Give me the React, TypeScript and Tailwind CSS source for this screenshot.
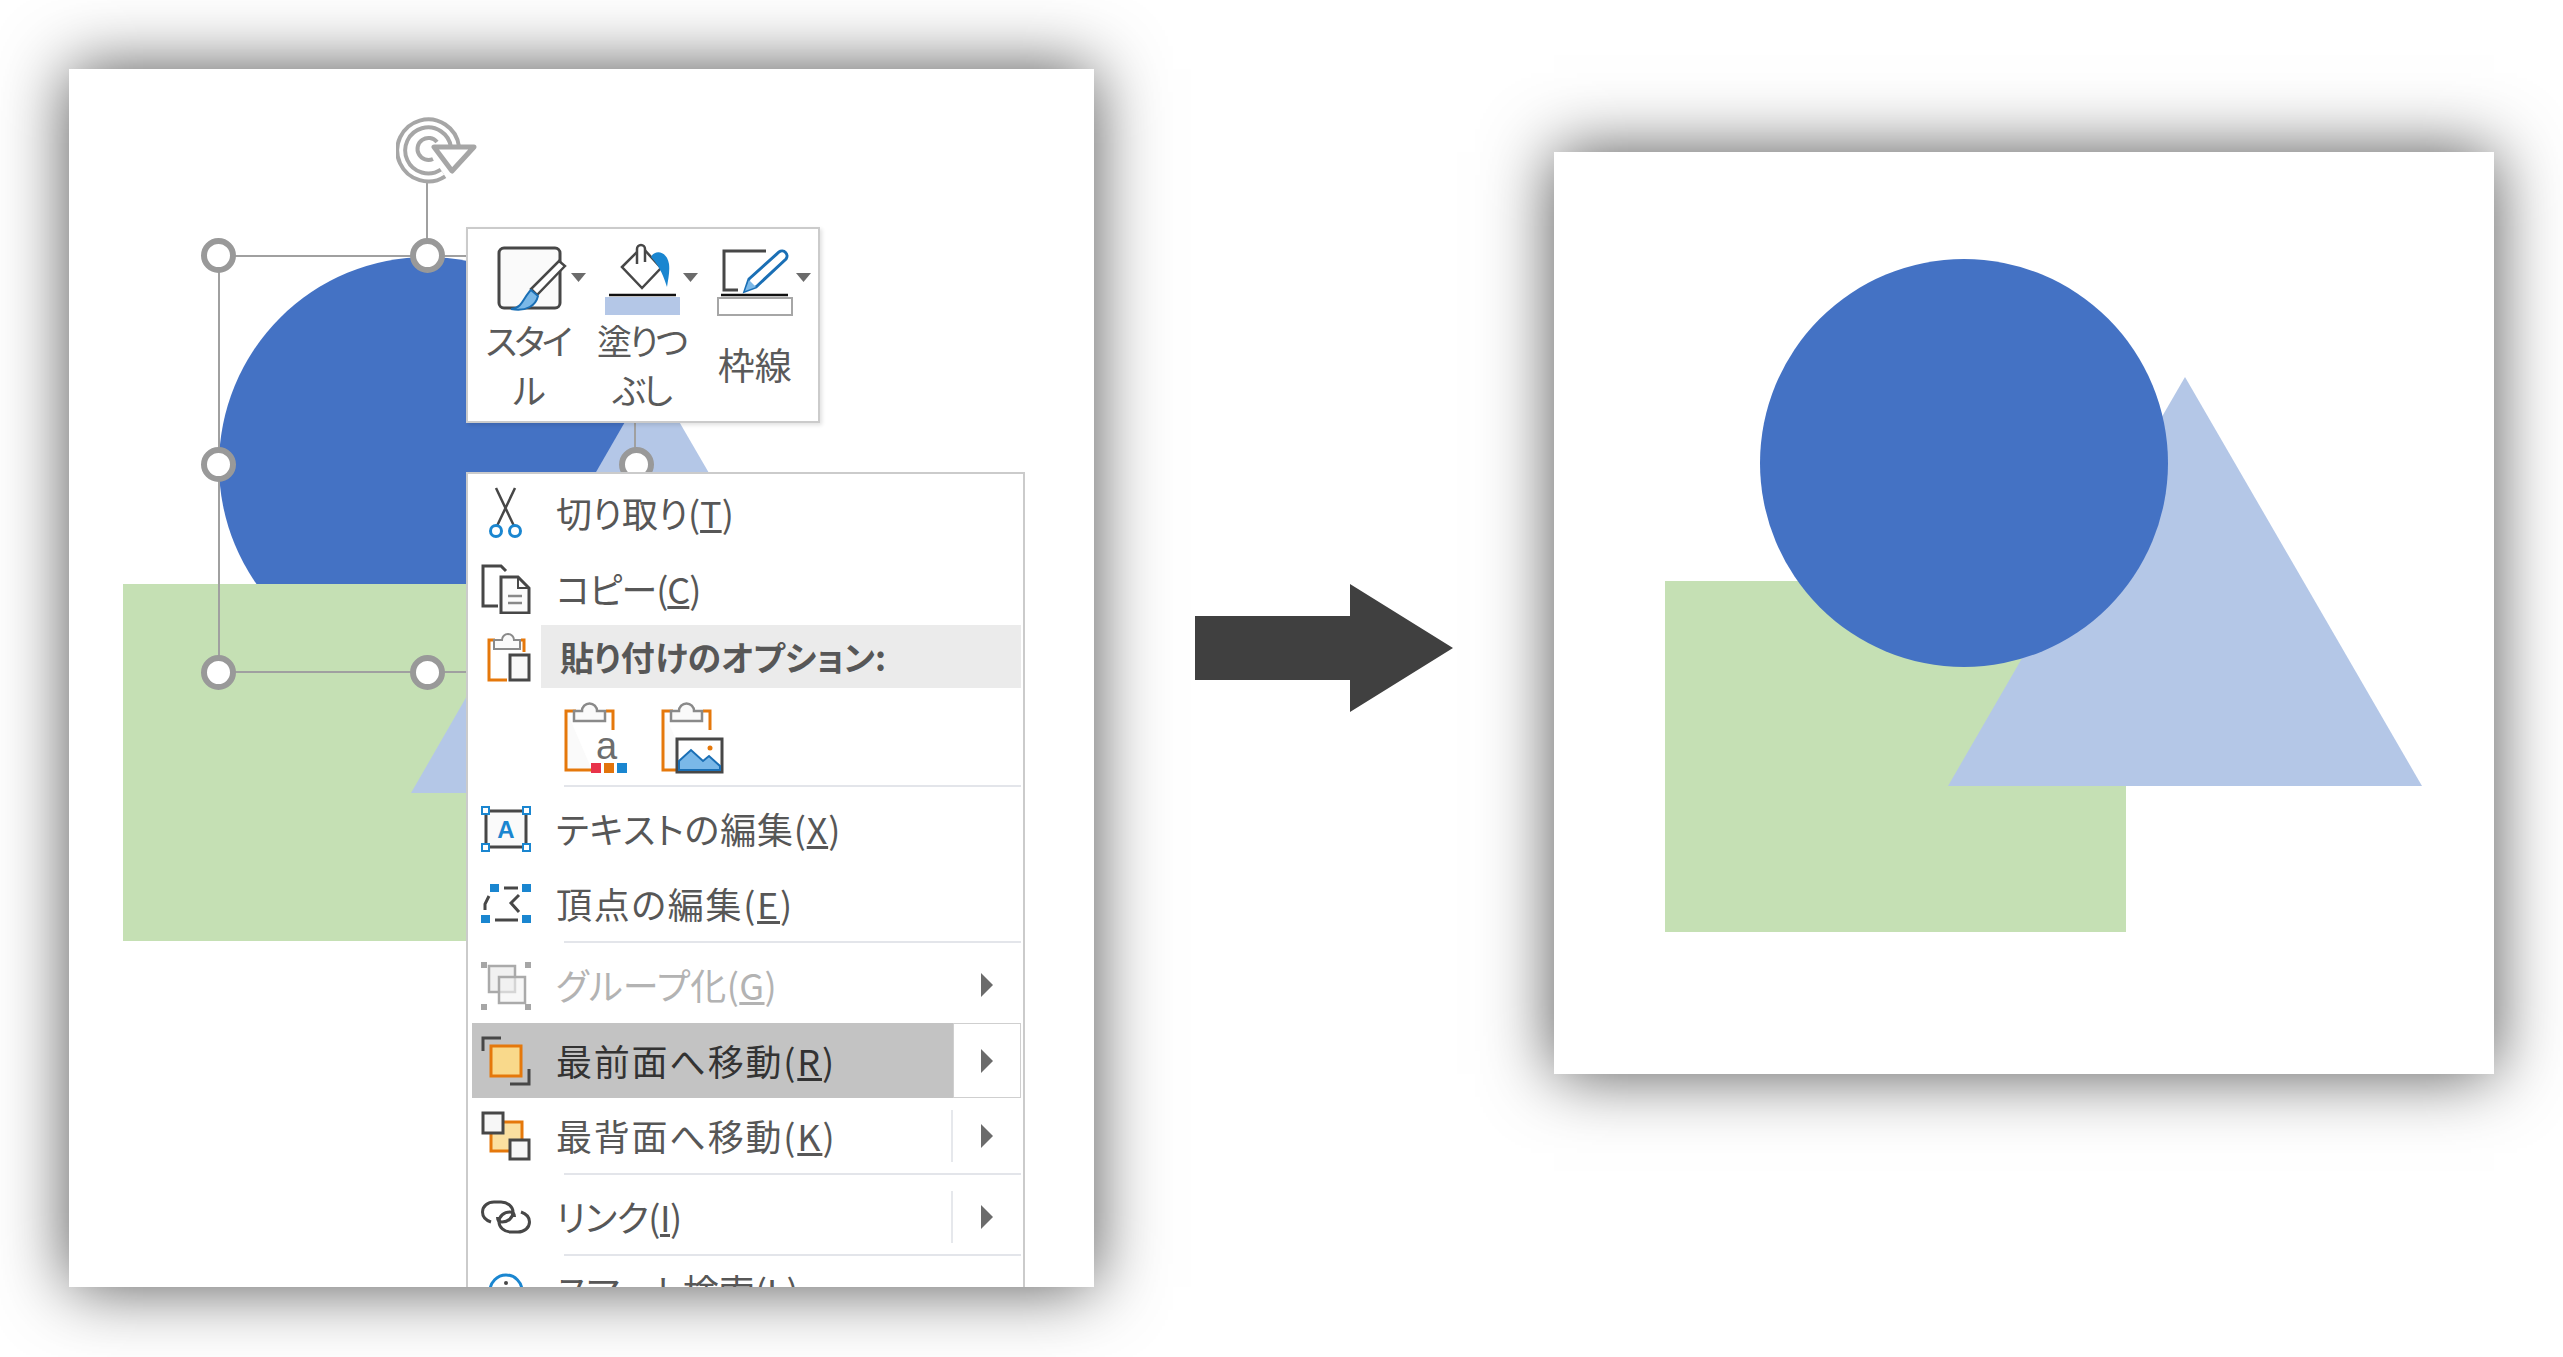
import type { ReactNode } from 'react';

const INK = '#474747';
const ORANGE = '#e5780b';
const BLUE = '#1a86d0';

function CutIcon() {
  return (
    <svg width="34" height="52" viewBox="0 0 34 52" fill="none">
      <path d="M7 1 L25 39 M26 1 L8 39" stroke={INK} strokeWidth="2.5" />
      <circle cx="7" cy="44" r="5.5" stroke={BLUE} strokeWidth="3" fill="#fff" />
      <circle cx="26" cy="44" r="5.5" stroke={BLUE} strokeWidth="3" fill="#fff" />
    </svg>
  );
}

function CopyIcon() {
  return (
    <svg width="50" height="50" viewBox="0 0 50 50" fill="none">
      <path d="M17 42 H2 V2 H20 L25 7" stroke={INK} strokeWidth="3" />
      <path d="M20 13 H37 L48 24 V49 H20 Z" stroke={INK} strokeWidth="3" fill="#fbfbfb" />
      <path d="M37 13 V24 H48" stroke={INK} strokeWidth="2" />
      <path d="M27 32 H41 M27 39 H41" stroke="#888" strokeWidth="2.5" />
    </svg>
  );
}

function ClipboardBase({ small }: { small?: boolean }) {
  if (small) {
    return (
      <>
        <path d="M8 8 H2 V48 H20" stroke={ORANGE} strokeWidth="3" fill="none" />
        <path d="M34 8 H37 V20" stroke={ORANGE} strokeWidth="3" fill="none" />
        <path d="M7 17 V8 H15 a6 6 0 0 1 12 0 H33 V17 Z" stroke="#8a8a8a" strokeWidth="2" fill="#fafafa" />
      </>
    );
  }
  return (
    <>
      <path d="M3 12 V70 H28" fill="#fafafa" />
      <path d="M12 11 H2 V70 H28" stroke={ORANGE} strokeWidth="3" fill="none" />
      <path d="M42 11 H49 V30" stroke={ORANGE} strokeWidth="3" fill="none" />
      <path d="M10 21 V11 H18 a7.5 7.5 0 0 1 15 0 H41 V21 Z" stroke="#8a8a8a" strokeWidth="2.5" fill="#fafafa" />
    </>
  );
}

function PasteHeaderIcon() {
  return (
    <svg width="44" height="50" viewBox="0 0 44 50" fill="none">
      <ClipboardBase small />
      <rect x="23" y="23" width="19" height="25" stroke={INK} strokeWidth="3" fill="#f8f8f8" />
    </svg>
  );
}

function PasteTextIcon() {
  return (
    <svg width="64" height="74" viewBox="0 0 64 74" fill="none">
      <ClipboardBase />
      <text x="32" y="59" fontSize="38" fontFamily="'Liberation Sans', sans-serif" fill="#6d6d6d">a</text>
      <rect x="27" y="63" width="10" height="10" fill="#e8334a" />
      <rect x="40" y="63" width="10" height="10" fill="#e2730b" />
      <rect x="53" y="63" width="10" height="10" fill={BLUE} />
    </svg>
  );
}

function PasteImageIcon() {
  return (
    <svg width="63" height="74" viewBox="0 0 63 74" fill="none">
      <ClipboardBase />
      <rect x="16" y="39" width="45" height="33" stroke={INK} strokeWidth="3" fill="#fff" />
      <path d="M18 70 V61 L30 50 L42 61 L48 56 L59 66 V70 Z" fill="#7ab8e8" stroke="#1a6fb5" strokeWidth="2" />
      <circle cx="49" cy="48" r="2.5" fill={ORANGE} />
    </svg>
  );
}

function EditTextIcon() {
  const corners = [[0, 0], [41, 0], [0, 37], [41, 37]];
  return (
    <svg width="50" height="46" viewBox="0 0 50 46" fill="none">
      <rect x="5" y="5" width="40" height="36" stroke={INK} strokeWidth="3" fill="#fafafa" />
      <text x="25" y="32" textAnchor="middle" fontSize="24" fontWeight="700" fontFamily="'Liberation Sans', sans-serif" fill={BLUE}>A</text>
      {corners.map(([x, y]) => (
        <rect key={`${x}-${y}`} x={x + 1} y={y + 1} width="7" height="7" fill="#fff" stroke={BLUE} strokeWidth="2" />
      ))}
    </svg>
  );
}

function EditPointsIcon() {
  return (
    <svg width="50" height="41" viewBox="0 0 50 41" fill="none">
      <rect x="9" y="1" width="9" height="8" fill={BLUE} />
      <rect x="41" y="1" width="9" height="8" fill={BLUE} />
      <rect x="0" y="32" width="9" height="8" fill={BLUE} />
      <rect x="41" y="32" width="9" height="8" fill={BLUE} />
      <path d="M23 5 H37 M38 12 L30 20 L38 29 M8 13 L4 21 V27 M14 37 H37" stroke={INK} strokeWidth="3" />
    </svg>
  );
}

function GroupIcon() {
  const corners = [[0, 2], [44, 2], [0, 44], [44, 44]];
  return (
    <svg width="50" height="50" viewBox="0 0 50 50" fill="none">
      <rect x="8" y="6" width="26" height="26" fill="#f1f1f1" stroke="#aaa" strokeWidth="2.5" />
      <rect x="18" y="17" width="26" height="26" fill="#f1f1f1" fillOpacity="0.6" stroke="#aaa" strokeWidth="2.5" />
      {corners.map(([x, y]) => (
        <rect key={`${x}-${y}`} x={x} y={y} width="6" height="6" fill="#a6a6a6" />
      ))}
    </svg>
  );
}

function BringFrontIcon() {
  return (
    <svg width="50" height="50" viewBox="0 0 50 50" fill="none">
      <path d="M2 15 V2 H20 M48 33 V48 H29" stroke={INK} strokeWidth="3" />
      <rect x="10" y="10" width="30" height="30" fill="#f9d98b" stroke={ORANGE} strokeWidth="3" />
    </svg>
  );
}

function SendBackIcon() {
  return (
    <svg width="50" height="50" viewBox="0 0 50 50" fill="none">
      <rect x="10" y="11" width="31" height="29" fill="#fbe0a0" stroke={ORANGE} strokeWidth="3" />
      <rect x="2" y="2" width="20" height="20" fill="#f7f7f7" stroke={INK} strokeWidth="3" />
      <rect x="29" y="29" width="19" height="19" fill="#f7f7f7" stroke={INK} strokeWidth="3" />
    </svg>
  );
}

function LinkIcon() {
  return (
    <svg width="50" height="34" viewBox="0 0 50 34" fill="none">
      <path d="M10 22 C4 20 1.5 16 1.5 12 C1.5 6 7 2 13 2 H20 C27 2 32 7 32 12 C32 18 27 22 21 22 C18 22 16.5 20 16.5 17" stroke={INK} strokeWidth="3" />
      <path d="M40 12 C46 14 48.5 18 48.5 22 C48.5 28 43 32 37 32 H30 C23 32 18 27 18 22 C18 16 23 12 29 12 C32 12 33.5 14 33.5 17" stroke={INK} strokeWidth="3" />
    </svg>
  );
}

function SearchInfoIcon() {
  return (
    <svg width="36" height="36" viewBox="0 0 36 36" fill="none">
      <circle cx="18" cy="18" r="16" stroke={BLUE} strokeWidth="3" />
      <circle cx="18" cy="10" r="2" fill={INK} />
    </svg>
  );
}

function RotateHandle() {
  return (
    <svg className="absolute left-[327px] top-[46px]" width="84" height="72" viewBox="0 0 84 72" fill="none">
      <path d="M47 58 A 27 27 0 1 1 59 32" stroke="#a6a6a6" strokeWidth="12" />
      <path d="M47 58 A 27 27 0 1 1 59 32" stroke="#fff" strokeWidth="4" />
      <path d="M37 44 A 11 11 0 1 1 41 27" stroke="#a6a6a6" strokeWidth="4" />
      <path d="M38 32 H78 L56 56 Z" fill="#fff" stroke="#a6a6a6" strokeWidth="5" strokeLinejoin="round" />
    </svg>
  );
}

function SizeHandle({ className }: { className: string }) {
  return <div className={`absolute h-[35px] w-[35px] rounded-full border-[6px] border-[#999999] bg-white ${className}`} />;
}

function SubmenuArrow() {
  return (
    <svg width="14" height="24" viewBox="0 0 14 24">
      <path d="M1 0 L13 12 L1 24 Z" fill="#6b6b6b" />
    </svg>
  );
}

function MenuRow({
  icon,
  heightClass,
  textClass = 'text-[#575757]',
  arrow,
  divider,
  active,
  children,
}: {
  icon: ReactNode;
  heightClass: string;
  textClass?: string;
  arrow?: boolean;
  divider?: boolean;
  active?: boolean;
  children: ReactNode;
}) {
  return (
    <div className={`flex items-stretch ${heightClass}`}>
      <div className={`flex min-w-0 flex-1 items-center ${active ? 'ml-[4px] bg-[#c3c3c3]' : ''}`}>
        <div className={`flex shrink-0 items-center justify-center ${active ? 'w-[68px]' : 'w-[76px]'}`}>{icon}</div>
        <div className={`-mt-[2px] whitespace-nowrap text-[36px] leading-none ${active ? 'ml-[16px]' : 'ml-[12px]'} ${textClass}`}>{children}</div>
      </div>
      {divider && <div className="my-auto h-[52px] w-[2px] bg-[#e6e8ec]" />}
      {arrow && (
        <div className={`mr-[2px] flex w-[68px] items-center justify-center ${active ? 'border border-[#cfcfcf] bg-white' : ''}`}>
          <SubmenuArrow />
        </div>
      )}
    </div>
  );
}

function Separator() {
  return <div className="ml-[96px] mr-[2px] h-[2px] bg-[#e3e5ea]" />;
}

function MiniToolbar() {
  const caret = (x: number) => <path d={`M${x} 33 H${x + 15} L${x + 7.5} 42 Z`} fill="#6b6b6b" />;
  return (
    <div className="absolute left-[397px] top-[158px] flex h-[196px] w-[354px] border-2 border-[#cbcbcb] bg-white pl-[3px] pt-[11px] text-[#5a5a5a] shadow-[2px_2px_4px_rgba(0,0,0,0.12)]">
      <div className="w-[113.5px]">
        <svg width="116" height="75" viewBox="0 0 116 75" fill="none" className="overflow-visible">
          <rect x="28" y="8" width="61" height="60" rx="5" stroke={INK} strokeWidth="3" fill="#fafafa" />
          <path d="M94 26 L66 55 L60 49 L88 21 Z" fill="#fff" stroke={INK} strokeWidth="2.5" />
          <path d="M40 69 C52 68 53 56 60 50 L67 56 C65 65 56 72 40 69 Z" fill="#7ab8e8" stroke="#1a6fb5" strokeWidth="2" />
          {caret(100)}
        </svg>
        <div className="flex h-[98px] items-center justify-center text-center text-[35px] leading-[49px] tracking-[-3px]">スタイ<br />ル</div>
      </div>
      <div className="w-[113.5px]">
        <svg width="116" height="75" viewBox="0 0 116 75" fill="none" className="overflow-visible">
          <path d="M37 27 L57 7 L76 28 L57 48 Z" stroke={INK} strokeWidth="2.5" fill="#fff" />
          <path d="M52 24 V9 a4 4 0 0 1 8 0 V22" stroke={INK} strokeWidth="2.5" fill="#fff" />
          <path d="M66 17 C70 9 82 11 84 24 C85 32 83 40 82 47 C79 38 76 28 66 17 Z" fill={BLUE} />
          <path d="M24 55 H91" stroke="#111" strokeWidth="2.5" />
          <rect x="20" y="57" width="75" height="18" fill="#b4c7e7" />
          {caret(98)}
        </svg>
        <div className="flex h-[98px] items-center justify-center text-center text-[35px] leading-[49px] tracking-[-3px]">塗りつ<br />ぶし</div>
      </div>
      <div className="w-[113.5px]">
        <svg width="116" height="75" viewBox="0 0 116 75" fill="none" className="overflow-visible">
          <path d="M68 11 H26 V50 H40" stroke={INK} strokeWidth="3" />
          <path d="M81 12 a5 5 0 0 1 7 7 L58 47 L47 51 L51 39 Z" fill="#fff" stroke="#1a6fb5" strokeWidth="3" />
          <path d="M47 51 L51 40 L58 47 Z" fill="#7ab8e8" />
          <path d="M23 55 H90" stroke="#111" strokeWidth="2.5" />
          <rect x="20" y="58" width="74" height="17" fill="#fff" stroke="#a6a6a6" strokeWidth="2" />
          {caret(98)}
        </svg>
        <div className="flex h-[98px] items-center justify-center text-center text-[37px] leading-[49px]">枠線</div>
      </div>
    </div>
  );
}

function ContextMenu() {
  return (
    <div className="absolute left-[397px] top-[403px] h-[900px] w-[559px] border-2 border-[#cbcbcb] bg-white">
      <MenuRow icon={<CutIcon />} heightClass="h-[78px]">切り取り(<u className="underline-offset-2">T</u>)</MenuRow>
      <MenuRow icon={<CopyIcon />} heightClass="h-[73px]" textClass="text-[#575757] tracking-[-1px]">コピー(<u className="underline-offset-2">C</u>)</MenuRow>
      <div className="flex h-[63px] items-center">
        <div className="flex w-[73px] shrink-0 items-center justify-center pl-[8px]"><PasteHeaderIcon /></div>
        <div className="mr-[2px] flex h-full flex-1 items-center bg-[#ebebeb] pl-[19px] text-[34px] font-bold leading-none text-[#575757]">貼り付けのオプション:</div>
      </div>
      <div className="flex h-[97px] items-center gap-[33px] pl-[96px]">
        <PasteTextIcon />
        <PasteImageIcon />
      </div>
      <Separator />
      <MenuRow icon={<EditTextIcon />} heightClass="h-[79px] pt-[5px]" textClass="text-[#575757] tracking-[0.8px]">テキストの編集(<u className="underline-offset-2">X</u>)</MenuRow>
      <MenuRow icon={<EditPointsIcon />} heightClass="h-[75px]" textClass="text-[#575757] tracking-[1.7px]">頂点の編集(<u className="underline-offset-2">E</u>)</MenuRow>
      <Separator />
      <MenuRow icon={<GroupIcon />} heightClass="h-[80px] pt-[4px]" textClass="text-[#b3b3b3] tracking-[0.4px]" arrow>グループ化(<u className="underline-offset-2">G</u>)</MenuRow>
      <MenuRow icon={<BringFrontIcon />} heightClass="h-[75px]" textClass="text-[#333333] tracking-[1.8px]" arrow active>最前面へ移動(<u className="underline-offset-2">R</u>)</MenuRow>
      <MenuRow icon={<SendBackIcon />} heightClass="h-[75px]" textClass="text-[#575757] tracking-[1.8px]" arrow divider>最背面へ移動(<u className="underline-offset-2">K</u>)</MenuRow>
      <Separator />
      <MenuRow icon={<LinkIcon />} heightClass="h-[79px] pt-[5px]" textClass="text-[#575757] tracking-[-0.5px]" arrow divider>リンク(<u className="underline-offset-2">I</u>)</MenuRow>
      <Separator />
      <MenuRow icon={<SearchInfoIcon />} heightClass="h-[70px]">スマート検索(<u className="underline-offset-2">L</u>)</MenuRow>
    </div>
  );
}

function EditorPanel() {
  return (
    <div className="relative h-[1218px] w-[1025px] shrink-0 overflow-hidden bg-white shadow-[0_0_65px_rgba(0,0,0,0.68)]">
      <div className="absolute left-[150px] top-[188px] h-[416px] w-[416px] rounded-full bg-[#4472c4]" />
      <div className="absolute left-[54px] top-[515px] h-[357px] w-[470px] bg-[#c5e0b4]" />
      <svg className="absolute left-[342px] top-[306px]" width="484" height="418" viewBox="0 0 484 418">
        <path d="M241 0 L484 418 H0 Z" fill="#b4c7e7" />
      </svg>

      {/* selection frame */}
      <div className="absolute left-[149px] top-[186px] h-[418px] w-[418px] border-2 border-[#a0a0a0]" />
      <div className="absolute left-[357px] top-[112px] h-[75px] w-[2px] bg-[#a0a0a0]" />
      <RotateHandle />
      <SizeHandle className="left-[132px] top-[169px]" />
      <SizeHandle className="left-[341px] top-[169px]" />
      <SizeHandle className="left-[132px] top-[378px]" />
      <SizeHandle className="left-[550px] top-[378px]" />
      <SizeHandle className="left-[132px] top-[586px]" />
      <SizeHandle className="left-[341px] top-[586px]" />

      <MiniToolbar />
      <ContextMenu />
    </div>
  );
}

function ResultPanel() {
  return (
    <div className="relative ml-[101px] mt-[83px] h-[922px] w-[940px] shrink-0 bg-white shadow-[0_0_65px_rgba(0,0,0,0.68)]">
      <div className="absolute left-[111px] top-[429px] h-[351px] w-[461px] bg-[#c5e0b4]" />
      <svg className="absolute left-[394px] top-[225px]" width="474" height="409" viewBox="0 0 474 409">
        <path d="M237 0 L474 409 H0 Z" fill="#b4c7e7" />
      </svg>
      <div className="absolute left-[206px] top-[107px] h-[408px] w-[408px] rounded-full bg-[#4472c4]" />
    </div>
  );
}

export default function App() {
  return (
    <div className="flex h-[1357px] w-[2563px] items-start overflow-hidden bg-white pl-[69px] pt-[69px] font-['Noto_Sans_CJK_JP',sans-serif] [font-feature-settings:'palt']">
      <EditorPanel />
      <svg className="ml-[101px] mt-[515px] shrink-0" width="258" height="128" viewBox="0 0 258 128">
        <path d="M0 32 H155 V0 L258 64 L155 128 V96 H0 Z" fill="#404040" />
      </svg>
      <ResultPanel />
    </div>
  );
}
